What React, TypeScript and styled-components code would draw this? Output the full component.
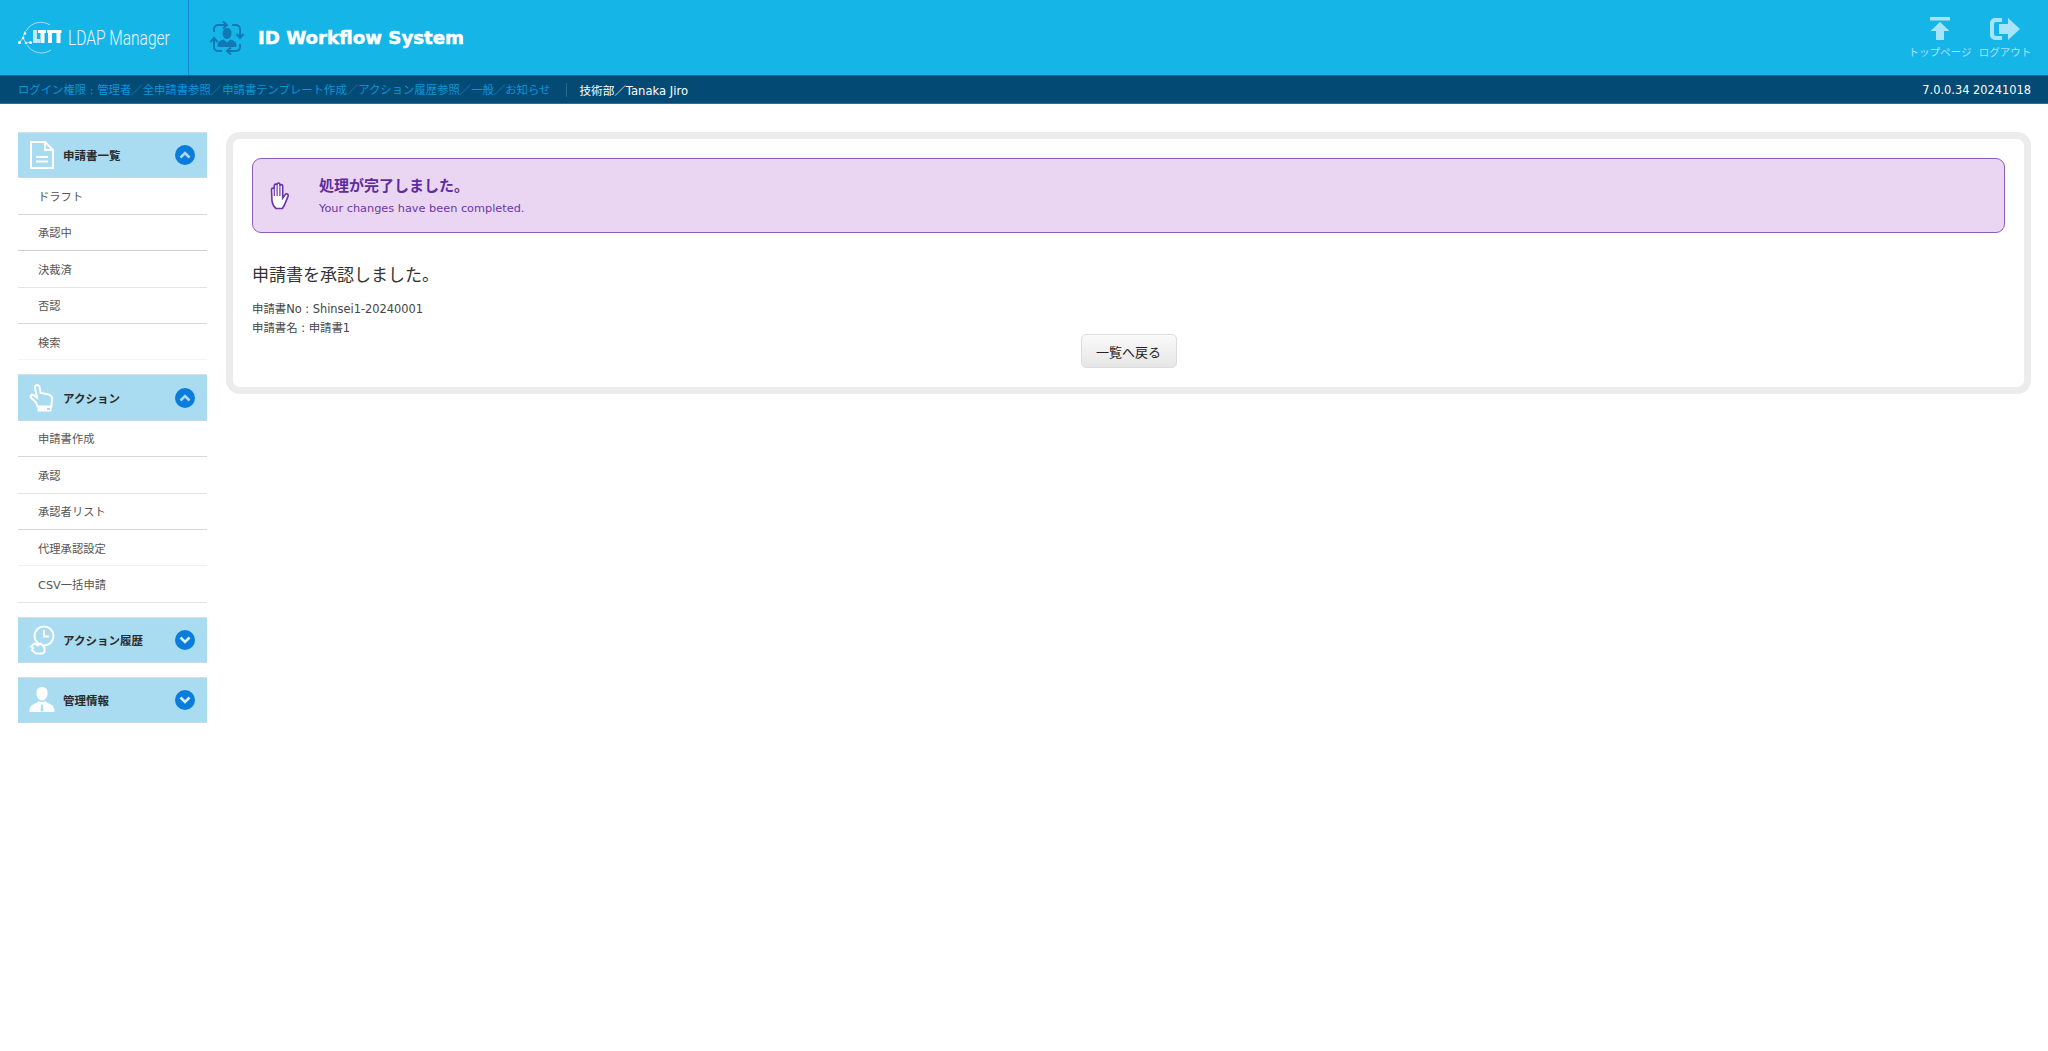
import styled, { createGlobalStyle } from "styled-components";

type TMenuItem = { label: string; line: string };

type TMenuSection = {
  title: string;
  icon: "doc" | "finger" | "history" | "person";
  open: boolean;
  items: TMenuItem[];
};

const menu: TMenuSection[] = [
  {
    title: "申請書一覧",
    icon: "doc",
    open: true,
    items: [
      { label: "ドラフト", line: "#d6d6d6" },
      { label: "承認中", line: "#cfcfcf" },
      { label: "決裁済", line: "#e4e4e4" },
      { label: "否認", line: "#d8d8d8" },
      { label: "検索", line: "#f4f4f4" },
    ],
  },
  {
    title: "アクション",
    icon: "finger",
    open: true,
    items: [
      { label: "申請書作成", line: "#d6d6d6" },
      { label: "承認", line: "#e4e4e4" },
      { label: "承認者リスト", line: "#d6d6d6" },
      { label: "代理承認設定", line: "#f0f0f0" },
      { label: "CSV一括申請", line: "#e4e4e4" },
    ],
  },
  { title: "アクション履歴", icon: "history", open: false, items: [] },
  { title: "管理情報", icon: "person", open: false, items: [] },
];

const MenuIcon = ({ name }: { name: TMenuSection["icon"] }) => {
  if (name === "doc") {
    return (
      <svg width="26" height="30" viewBox="0 0 26 30" fill="none" stroke="#fff" strokeWidth="2">
        <path d="M2 2h14l8 8v18H2z" />
        <path d="M16 2v8h8" />
        <path d="M7 17h12M7 21.500h12" strokeWidth="1.800" />
      </svg>
    );
  }
  if (name === "finger") {
    return (
      <svg width="26" height="30" viewBox="0 0 26 30" fill="none" stroke="#fff" strokeWidth="2">
        <path d="M7 2.500c1.800-1 3.300 0 3.600 1.800l1 5.700 6 1c3 .5 5.400 1.800 5.400 4.500l-.6 8H8.500L7 19.500 2 14.500c-1-1.500.5-3.500 2.200-2.600L8 14.500 6 5c-.2-1 0-2 1-2.500z" />
        <rect x="8.500" y="23.500" width="14" height="5" fill="#fff" stroke="none" />
        <rect x="18" y="25" width="3" height="2" fill="#a9dbf1" stroke="none" />
      </svg>
    );
  }
  if (name === "history") {
    return (
      <svg width="26" height="30" viewBox="0 0 26 30" fill="none" stroke="#fff" strokeWidth="2">
        <circle cx="15" cy="11" r="9.500" />
        <path d="M15 5v6.500h5" />
        <path d="M5.500 18.500l-3.500 3 2 1.500-1 2 4 3.500h6.500l2-1.500v-4.500l-4-4-2.500 2z" fill="#a9dbf1" />
      </svg>
    );
  }
  return (
    <svg width="28" height="30" viewBox="0 0 28 30" fill="#fff">
      <path d="M14 1c4 0 6 2.500 6 6.500 0 4-2.200 8-6 8s-6-4-6-8C8 3.500 10 1 14 1z" />
      <path d="M10 16c-1 2-3 2.500-5 3.500-3 1.200-4.500 3.500-4.500 8.500h27c0-5-1.500-7.300-4.500-8.500-2-1-4-1.500-5-3.500-2.500 1.500-5.500 1.500-8 0z" />
      <path d="M13 20h2l.5 6-1.500 2-1.500-2z" fill="#a9dbf1" />
    </svg>
  );
};

const Chevron = ({ open }: { open: boolean }) => (
  <ChevronCircle>
    <svg width="12" height="8" viewBox="0 0 12 8" fill="none" stroke={open ? "#a9dbf1" : "#d6effa"} strokeWidth="2.600">
      <path d={open ? "M1.500 6.500 6 2l4.500 4.500" : "M1.500 1.500 6 6l4.500-4.500"} />
    </svg>
  </ChevronCircle>
);

const App = () => (
  <Page>
    <GlobalStyle />
    <Header>
      <LogoBlock>
        <LogoMark width="44" height="34" viewBox="0 0 44 34">
          <g fill="none" stroke="#d8f2fc" strokeWidth="0.800" opacity="0.9">
            <path d="M8 10A17 17 0 0 1 32 4" />
            <path d="M9 24A17 17 0 0 0 33 29" />
            <path d="M1 22l4-5 3 5 5-1M5 17l2-7" />
          </g>
          <g fill="#fff">
            <circle cx="1.500" cy="21.500" r="1.500" />
            <circle cx="5" cy="17" r="1.300" />
            <circle cx="8" cy="22" r="1.300" />
            <circle cx="7" cy="12.500" r="1.200" />
            <circle cx="12.500" cy="21.500" r="1.500" />
            <rect x="20" y="9" width="8" height="3" />
            <rect x="22.500" y="12" width="4" height="10" />
            <rect x="29" y="9" width="14.500" height="3" />
            <rect x="30" y="12" width="4" height="10" />
            <rect x="38.500" y="12" width="4" height="10" />
          </g>
          <path d="M15 9h4v9h3v4h-7z" fill="#bfe9fa" />
        </LogoMark>
        <LogoText>LDAP Manager</LogoText>
      </LogoBlock>
      <TitleBlock>
        <svg width="38" height="38" viewBox="0 0 38 38" fill="none" stroke="#0e79b5" strokeWidth="2">
          <path d="M6 13V10a4 4 0 0 1 4-4h8" />
          <path d="M15 2.500 19 6l-4 3.500" />
          <path d="M24 6h4a4 4 0 0 1 4 4v8" />
          <path d="M28.500 15l3.500 4 3.500-4" />
          <path d="M32 25v3a4 4 0 0 1-4 4h-8" />
          <path d="M23 28.500 19 32l4 3.500" />
          <path d="M14 32h-4a4 4 0 0 1-4-4v-8" />
          <path d="M2.500 23 6 19l3.500 4" />
          <g fill="#0e79b5" stroke="none">
            <path d="M19 9c3 0 4.500 2 4.500 5 0 3-1.800 6-4.500 6s-4.500-3-4.500-6c0-3 1.500-5 4.500-5z" />
            <path d="M15.500 20.500c-3 1-6 2-6 6 0 1 1 1.500 2 1.500h15c1 0 2-.5 2-1.500 0-4-3-5-6-6l-3.500 3z" />
          </g>
        </svg>
        <SystemName>ID Workflow System</SystemName>
      </TitleBlock>
      <TopNav>
        <TopLink>
          <svg width="24" height="24" viewBox="0 0 24 24" fill="#a9e3fa">
            <rect x="2" y="0" width="20" height="3.500" />
            <path d="M12 5l9.500 9H16v9H8v-9H2.500z" />
          </svg>
          <span>トップページ</span>
        </TopLink>
        <TopLink>
          <svg width="32" height="24" viewBox="0 0 32 24" fill="#a9e3fa">
            <path d="M6 1h7v4H7a2 2 0 0 0-2 2v10a2 2 0 0 0 2 2h6v4H6a5 5 0 0 1-5-5V6a5 5 0 0 1 5-5z" />
            <path d="M19 1l12 11-12 11v-6h-9V7h9z" />
          </svg>
          <span>ログアウト</span>
        </TopLink>
      </TopNav>
    </Header>
    <SubBar>
      <UserInfo>
        <Roles>ログイン権限 : 管理者／全申請書参照／申請書テンプレート作成／アクション履歴参照／一般／お知らせ</Roles>
        <UserName>技術部／Tanaka Jiro</UserName>
      </UserInfo>
      <Version>7.0.0.34 20241018</Version>
    </SubBar>
    <Main>
      <Sidebar>
        {menu.map((section) => (
          <section key={section.title}>
            <SectionHead>
              <SectionIcon>
                <MenuIcon name={section.icon} />
              </SectionIcon>
              <SectionTitle>{section.title}</SectionTitle>
              <Chevron open={section.open} />
            </SectionHead>
            {section.items.map((item) => (
              <MenuRow key={item.label} $line={item.line}>
                {item.label}
              </MenuRow>
            ))}
          </section>
        ))}
      </Sidebar>
      <Panel>
        <Notice>
          <NoticeIcon>
            <svg width="22" height="28" viewBox="0 0 22 28" fill="#fff" stroke="#6a35a8" strokeWidth="1.600">
              <path d="M6 26.500c-2-1.500-3.500-4-4-7.500L1.500 7.500a1.400 1.400 0 0 1 2.800 0v-4a1.400 1.400 0 0 1 2.800 0V2.400a1.400 1.400 0 0 1 2.800 0V4a1.400 1.400 0 0 1 2.800 0v12l2.500-3.500c1-1.500 3.600-.5 3 1.400l-3.300 8c-.7 1.800-1.500 3-2.500 4.600z" />
              <path d="M4.300 7.500V14M7.100 3.500V14M9.900 4V14" fill="none" strokeWidth="1.200" />
            </svg>
          </NoticeIcon>
          <div>
            <NoticeTitle>処理が完了しました。</NoticeTitle>
            <NoticeText>Your changes have been completed.</NoticeText>
          </div>
        </Notice>
        <Message>申請書を承認しました。</Message>
        <Detail>申請書No : Shinsei1-20240001</Detail>
        <Detail>申請書名 : 申請書1</Detail>
        <ButtonRow>
          <BackButton>一覧へ戻る</BackButton>
        </ButtonRow>
      </Panel>
    </Main>
  </Page>
);

const GlobalStyle = createGlobalStyle`
  html,
  body {
    margin: 0;
    background: #fff;
  }
  body {
    font-family: "DejaVu Sans", "Noto Sans CJK JP", sans-serif;
    font-size: 11.300px;
    color: #333;
  }
`;

const Page = styled.div`
  min-height: 1051px;
`;

const Header = styled.header`
  display: flex;
  align-items: stretch;
  height: 75px;
  background-color: #16b5e8;
`;

const LogoBlock = styled.div`
  display: flex;
  align-items: center;
  flex: none;
  width: 189px;
  padding-left: 18px;
  box-sizing: border-box;
  border-right: 1px solid #1286d4;
`;

const LogoMark = styled.svg`
  flex: none;
`;

const LogoText = styled.div`
  margin-left: 6px;
  font-family: "Roboto", sans-serif;
  font-weight: 300;
  font-size: 21px;
  color: #e6f7fe;
  white-space: nowrap;
  transform: scaleX(0.74);
  transform-origin: left center;
`;

const TitleBlock = styled.div`
  display: flex;
  align-items: center;
  flex: 1;
  padding-left: 19px;
  gap: 12px;
`;

const SystemName = styled.div`
  font-family: "DejaVu Sans", sans-serif;
  font-weight: 700;
  font-size: 18.200px;
  color: #fff;
  -webkit-text-stroke: 0.5px #fff;
`;

const TopNav = styled.nav`
  display: flex;
  align-items: flex-start;
  padding-top: 17px;
  padding-right: 13px;
  gap: 5px;
`;

const TopLink = styled.a`
  display: flex;
  flex-direction: column;
  align-items: center;
  gap: 4px;
  width: 60px;
  font-size: 10.500px;
  line-height: 14px;
  white-space: nowrap;
  color: #a9e3fa;
`;

const SubBar = styled.div`
  display: flex;
  align-items: center;
  justify-content: space-between;
  box-sizing: border-box;
  height: 29px;
  padding: 0 17px 0 18px;
  background-color: #034a74;
  border-top: 1px solid #056ca3;
  border-bottom: 1px solid #2c7191;
`;

const UserInfo = styled.div`
  display: flex;
  align-items: center;
`;

const Roles = styled.div`
  padding-right: 16px;
  font-size: 11.360px;
  border-right: 1px solid #2c6a8c;
  line-height: 14px;
  color: #0d95dc;
  white-space: nowrap;
`;

const UserName = styled.div`
  margin-left: 12px;
  font-size: 11.600px;
  color: #fff;
`;

const Version = styled.div`
  font-size: 11.400px;
  color: #fff;
`;

const Main = styled.main`
  display: flex;
  align-items: flex-start;
  gap: 19px;
  padding: 28px 17px 0 18px;
`;

const Sidebar = styled.aside`
  display: flex;
  flex-direction: column;
  gap: 14px;
  flex: 0 0 189px;
`;

const SectionHead = styled.div`
  display: flex;
  align-items: center;
  box-sizing: border-box;
  height: 46.400px;
  padding-left: 11px;
  background-color: #a9dbf1;
  border-top: 1px solid #d4dfe4;
  border-bottom: 1px solid #c8d8e0;
`;

const SectionIcon = styled.div`
  display: flex;
  justify-content: center;
  width: 26px;
`;

const SectionTitle = styled.div`
  flex: 1;
  margin-left: 8px;
  font-weight: 700;
  font-size: 11.500px;
  color: #2b2b2b;
`;

const ChevronCircle = styled.div`
  display: flex;
  align-items: center;
  justify-content: center;
  width: 20px;
  height: 20px;
  margin-right: 12px;
  border-radius: 50%;
  background-color: #0a7ddc;
`;

const MenuRow = styled.div<{ $line: string }>`
  display: flex;
  align-items: center;
  box-sizing: border-box;
  height: 36.400px;
  padding-left: 20px;
  color: #555;
  border-bottom: 1px solid ${(props) => props.$line};
`;

const Panel = styled.div`
  flex: 1;
  box-sizing: border-box;
  height: 262px;
  padding: 19px 19px 0 19px;
  border: 7px solid #ececec;
  border-radius: 14px;
  background-color: #fff;
`;

const Notice = styled.div`
  display: flex;
  align-items: center;
  box-sizing: border-box;
  height: 75px;
  margin-bottom: 30px;
  background-color: #ead6f2;
  border: 1px solid #8f5cb8;
  border-radius: 9px;
`;

const NoticeIcon = styled.div`
  display: flex;
  width: 66px;
  padding-left: 17px;
  box-sizing: border-box;
`;

const NoticeTitle = styled.div`
  margin-bottom: 6px;
  font-weight: 700;
  font-size: 15px;
  line-height: 20px;
  color: #5f2d9b;
`;

const NoticeText = styled.div`
  line-height: 14px;
  color: #6a35a8;
`;

const Message = styled.div`
  margin-bottom: 13px;
  font-size: 17px;
  line-height: 24px;
  color: #333;
`;

const Detail = styled.div`
  font-size: 11.400px;
  line-height: 19px;
  color: #444;
`;

const ButtonRow = styled.div`
  display: flex;
  justify-content: center;
  margin-top: -4px;
`;

const BackButton = styled.button`
  box-sizing: border-box;
  width: 96px;
  height: 34px;
  padding: 0;
  font-family: inherit;
  font-size: 13px;
  color: #222;
  background: linear-gradient(#fafafa, #e6e6e6);
  border: 1px solid #ddd;
  border-radius: 5px;
`;

export default App;
